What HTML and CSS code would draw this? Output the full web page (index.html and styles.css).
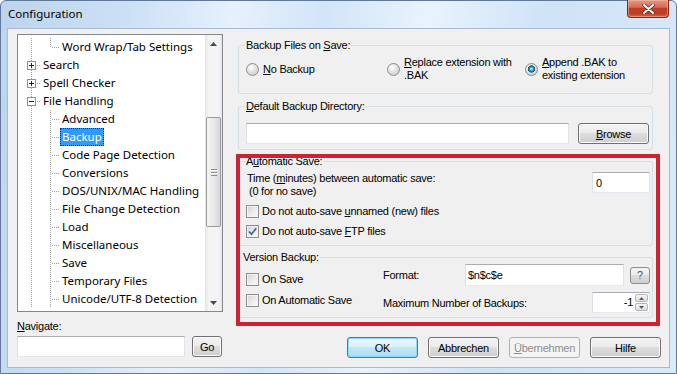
FILE: index.html
```html
<!DOCTYPE html>
<html lang="en">
<head>
    <meta charset="UTF-8">
    <title>Configuration</title>
    <link rel="stylesheet" href="styles.css">
</head>
<body>
    <div class="window">
        <div class="titlebar">
            <span class="title">Configuration</span>
            <button class="close-btn" type="button" aria-label="Close">
                <svg width="13" height="10" viewBox="0 0 13 10">
                    <path d="M2 1 L11 9 M11 1 L2 9" stroke="#6b2a20" stroke-width="3.4" stroke-linecap="round" fill="none"/>
                    <path d="M2 1 L11 9 M11 1 L2 9" stroke="#ffffff" stroke-width="2" stroke-linecap="round" fill="none"/>
                </svg>
            </button>
        </div>

        <div class="client">
            <!-- left: page tree + navigate box -->
            <div class="left-col">
                <div class="tree">
                    <ul class="tree-items">
                        <li class="node"><span class="g g-line"></span><span class="g g-end"></span><span class="label">Word Wrap/Tab Settings</span></li>
                        <li class="node"><span class="g g-tee"><span class="exp plus"></span></span><span class="label">Search</span></li>
                        <li class="node"><span class="g g-tee"><span class="exp plus"></span></span><span class="label">Spell Checker</span></li>
                        <li class="node"><span class="g g-tee"><span class="exp minus"></span></span><span class="label">File Handling</span></li>
                        <li class="node"><span class="g g-line"></span><span class="g g-tee"></span><span class="label">Advanced</span></li>
                        <li class="node"><span class="g g-line"></span><span class="g g-tee"></span><span class="label sel">Backup</span></li>
                        <li class="node"><span class="g g-line"></span><span class="g g-tee"></span><span class="label">Code Page Detection</span></li>
                        <li class="node"><span class="g g-line"></span><span class="g g-tee"></span><span class="label">Conversions</span></li>
                        <li class="node"><span class="g g-line"></span><span class="g g-tee"></span><span class="label">DOS/UNIX/MAC Handling</span></li>
                        <li class="node"><span class="g g-line"></span><span class="g g-tee"></span><span class="label">File Change Detection</span></li>
                        <li class="node"><span class="g g-line"></span><span class="g g-tee"></span><span class="label">Load</span></li>
                        <li class="node"><span class="g g-line"></span><span class="g g-tee"></span><span class="label">Miscellaneous</span></li>
                        <li class="node"><span class="g g-line"></span><span class="g g-tee"></span><span class="label">Save</span></li>
                        <li class="node"><span class="g g-line"></span><span class="g g-tee"></span><span class="label">Temporary Files</span></li>
                        <li class="node"><span class="g g-line"></span><span class="g g-tee"></span><span class="label">Unicode/UTF-8 Detection</span></li>
                    </ul>
                    <div class="vscroll">
                        <span class="sb-arrow">
                            <svg width="7" height="4" viewBox="0 0 7 4"><polygon points="0,4 3.5,0 7,4" fill="#4a4a4a"/></svg>
                        </span>
                        <div class="sb-track">
                            <div class="sb-thumb"><span class="grip"></span></div>
                        </div>
                        <span class="sb-arrow">
                            <svg width="7" height="4" viewBox="0 0 7 4"><polygon points="0,0 7,0 3.5,4" fill="#4a4a4a"/></svg>
                        </span>
                    </div>
                </div>
                <label class="nav-label" for="navigate"><u>N</u>avigate:</label>
                <div class="nav-row">
                    <input class="textbox nav-input" id="navigate" type="text">
                    <button class="btn go-btn" type="button">Go</button>
                </div>
            </div>

            <!-- right: backup page -->
            <div class="right-col">
                <fieldset class="group">
                    <legend>Backup Files on <u>S</u>ave:</legend>
                    <div class="radio-row">
                        <label class="radio"><span class="radio-box"></span><span><u>N</u>o Backup</span></label>
                        <label class="radio"><span class="radio-box"></span><span><u>R</u>eplace extension with<br>.BAK</span></label>
                        <label class="radio"><span class="radio-box on"></span><span><u>A</u>ppend .BAK to<br>existing extension</span></label>
                    </div>
                </fieldset>

                <fieldset class="group group-dir">
                    <legend><u>D</u>efault Backup Directory:</legend>
                    <div class="dir-row">
                        <input class="textbox dir-input" type="text">
                        <button class="btn" type="button"><u>B</u>rowse</button>
                    </div>
                </fieldset>

                <div class="annotated">
                    <fieldset class="group group-auto">
                        <legend>A<u>u</u>tomatic Save:</legend>
                        <div class="auto-row">
                            <span class="auto-text">Time (<u>m</u>inutes) between automatic save:<br><span class="indent">(0 for no save)</span></span>
                            <input class="textbox num-input" type="text" value="0">
                        </div>
                        <label class="check"><span class="check-box"></span><span>Do not auto-save <u>u</u>nnamed (new) files</span></label>
                        <label class="check"><span class="check-box">
                            <svg width="11" height="11" viewBox="0 0 11 11"><path d="M2 5.5 L4.5 8.2 L9.2 2.2" stroke="#4b5d97" stroke-width="1.7" fill="none"/></svg>
                        </span><span>Do not auto-save <u>F</u>TP files</span></label>
                    </fieldset>

                    <fieldset class="group group-version">
                        <legend>Version Backup:</legend>
                        <div class="version-body">
                            <div class="ver-checks">
                                <label class="check"><span class="check-box"></span><span>On Save</span></label>
                                <label class="check"><span class="check-box"></span><span>On Automatic Save</span></label>
                            </div>
                            <div class="ver-fields">
                                <div class="field-row format-row">
                                    <span class="field-label">Format:</span>
                                    <input class="textbox format-input" type="text" value="$n$c$e">
                                    <button class="help-btn" type="button">?</button>
                                </div>
                                <div class="field-row">
                                    <span class="field-label">Maximum Number of Backups:</span>
                                    <div class="spin">
                                        <span class="spin-value">-1</span>
                                        <span class="spin-btns">
                                            <span class="spin-btn"><svg width="5" height="3" viewBox="0 0 5 3"><polygon points="0,3 2.5,0 5,3" fill="#5a5a5a"/></svg></span>
                                            <span class="spin-btn"><svg width="5" height="3" viewBox="0 0 5 3"><polygon points="0,0 5,0 2.5,3" fill="#5a5a5a"/></svg></span>
                                        </span>
                                    </div>
                                </div>
                            </div>
                        </div>
                    </fieldset>
                </div>

                <div class="button-row">
                    <button class="btn btn-default" type="button">OK</button>
                    <button class="btn" type="button">Abbrechen</button>
                    <button class="btn" type="button" disabled><u>Ü</u>bernehmen</button>
                    <button class="btn" type="button">Hilfe</button>
                </div>
            </div>
        </div>
    </div>
</body>
</html>
```

FILE: styles.css
```css
/* Vista style configuration dialog */
* {
    box-sizing: border-box;
}

body {
    margin: 0;
    background: #ffffff;
    font-family: "Liberation Sans", Arial, sans-serif;
    font-size: 11px;
    letter-spacing: -0.25px;
    color: #000;
}

/* window frame */
.window {
    width: 677px;
    height: 374px;
    display: flex;
    flex-direction: column;
    padding: 0 7px 6px;
    border: 1px solid #60789a;
    border-radius: 6px 6px 0 0;
    background: linear-gradient(100deg, #bcd4ec 0%, #cde1f5 18%, #e6f1fc 32%, #d2e5f7 44%, #e8f3fd 58%, #cfe3f6 74%, #d9eaf9 100%);
}

.titlebar {
    height: 28px;
    display: flex;
    justify-content: space-between;
    align-items: flex-start;
}

.title {
    font-family: "Noto Sans", sans-serif;
    font-size: 11.5px;
    letter-spacing: 0;
    line-height: 16px;
    margin-top: 5px;
}

.close-btn {
    width: 42px;
    height: 18px;
    margin-top: -1px;
    padding: 0;
    display: flex;
    align-items: center;
    justify-content: center;
    border: 1px solid #7a2a1f;
    border-top: none;
    border-radius: 0 0 4px 4px;
    background: linear-gradient(#e49a88 0%, #d86a52 42%, #c23e22 50%, #bd3f25 80%, #d0694d 100%);
    box-shadow: inset 0 0 0 1px rgba(255, 200, 180, 0.45);
}

.client {
    height: 338px;
    display: grid;
    grid-template-columns: 206px 425px;
    column-gap: 14px;
    padding-left: 9px;
    background: #f0f0f0;
    box-shadow: 0 0 0 1px #a6bbd3;
}

/* left column */
.left-col {
    display: flex;
    flex-direction: column;
    padding-top: 5px;
}

.tree {
    height: 278px;
    display: flex;
    border: 1px solid #828790;
    background: #fff;
}

.tree-items {
    flex: 1;
    margin: 0;
    padding: 3px 0 0 4px;
    list-style: none;
    overflow: hidden;
    font-family: "Noto Sans", sans-serif;
    font-size: 11.5px;
    letter-spacing: 0;
}

.node {
    height: 18px;
    display: flex;
    align-items: center;
    white-space: nowrap;
}

.g {
    width: 19px;
    height: 18px;
    flex: none;
    display: flex;
    align-items: center;
    justify-content: center;
}

.g-line {
    background: repeating-linear-gradient(to bottom, #a0a0a0 0 1px, transparent 1px 2px) 9px 0 / 1px 100% no-repeat;
}

.g-tee {
    background:
        repeating-linear-gradient(to bottom, #a0a0a0 0 1px, transparent 1px 2px) 9px 0 / 1px 100% no-repeat,
        repeating-linear-gradient(to right, #a0a0a0 0 1px, transparent 1px 2px) 11px 9px / 8px 1px no-repeat;
}

.g-end {
    background:
        repeating-linear-gradient(to bottom, #a0a0a0 0 1px, transparent 1px 2px) 9px 0 / 1px 10px no-repeat,
        repeating-linear-gradient(to right, #a0a0a0 0 1px, transparent 1px 2px) 11px 9px / 8px 1px no-repeat;
}

.exp {
    width: 9px;
    height: 9px;
    border: 1px solid #919191;
    background: #fff;
}

.exp.plus {
    background:
        linear-gradient(#222, #222) center / 5px 1px no-repeat,
        linear-gradient(#222, #222) center / 1px 5px no-repeat,
        #fff;
}

.exp.minus {
    background: linear-gradient(#222, #222) center / 5px 1px no-repeat, #fff;
}

.label {
    padding: 0 2px;
    line-height: 18px;
}

.label.sel {
    background: #3399ff;
    color: #fff;
    outline: 1px dotted #103050;
    outline-offset: -1px;
}

/* scrollbar */
.vscroll {
    width: 17px;
    display: flex;
    flex-direction: column;
    background: linear-gradient(to right, #e2e2e2 0%, #f4f4f4 20%, #f4f4f4 80%, #e6e6e6 100%);
}

.sb-arrow {
    height: 17px;
    display: flex;
    align-items: center;
    justify-content: center;
}

.sb-track {
    flex: 1;
    padding: 0 1px;
}

.sb-thumb {
    height: 110px;
    margin-top: 65px;
    display: flex;
    align-items: center;
    justify-content: center;
    border: 1px solid #9a9a9a;
    border-radius: 2px;
    background: linear-gradient(to right, #f6f6f6 0%, #e9e9e9 50%, #d9d9d9 100%);
}

.grip {
    width: 6px;
    height: 7px;
    background: repeating-linear-gradient(to bottom, #8a8a8a 0 1px, #fafafa 1px 2px, transparent 2px 3px);
}

.nav-label {
    margin-top: 8px;
    line-height: 13px;
}

.nav-row {
    margin-top: 3px;
    display: flex;
    align-items: flex-end;
    gap: 7px;
}

.nav-input {
    width: 168px;
    height: 22px;
}

/* controls */
.textbox {
    height: 21px;
    padding: 0 3px;
    border: 1px solid;
    border-color: #abadb3 #e2e3ea #e3e9ef #dbdfe6;
    background: #fff;
    font: inherit;
    letter-spacing: inherit;
    color: #000;
    outline: none;
}

.btn {
    width: 71px;
    height: 21px;
    padding: 0;
    font: inherit;
    letter-spacing: inherit;
    color: #000;
    border: 1px solid #707070;
    border-radius: 3px;
    background: linear-gradient(#f3f3f3 0%, #ebebeb 48%, #dddddd 50%, #cfcfcf 100%);
    box-shadow: inset 0 0 0 1px #fbfbfb;
}

.btn.go-btn {
    width: 30px;
}

.btn-default {
    border-color: #3c7fb1;
    background: linear-gradient(#ecf7fd 0%, #dcf1fc 48%, #c2e7fc 50%, #acdcf6 100%);
    box-shadow: inset 0 0 0 1px #8fd6f7;
}

.btn:disabled {
    color: #8d8d8d;
    border-color: #adb2b5;
    background: #f4f4f4;
    box-shadow: none;
}

.radio {
    display: flex;
    align-items: center;
    gap: 4px;
    line-height: 13px;
}

.radio-box {
    width: 13px;
    height: 13px;
    flex: none;
    border: 1px solid #8c8c8c;
    border-radius: 50%;
    background: radial-gradient(circle at 38% 32%, #ffffff 0%, #e2e2e2 45%, #c6c6c6 100%);
}

.radio-box.on {
    background:
        radial-gradient(circle at 50% 45%, #8fdcf7 0 1px, #2a93bf 2px, #0c5573 3.4px, transparent 3.9px),
        radial-gradient(circle at 38% 32%, #ffffff 0%, #e2e2e2 45%, #c6c6c6 100%);
}

.check {
    display: flex;
    align-items: center;
    gap: 3px;
    line-height: 13px;
    white-space: nowrap;
}

.check-box {
    width: 13px;
    height: 13px;
    flex: none;
    display: flex;
    align-items: center;
    justify-content: center;
    border: 1px solid #8f8f8f;
    background: linear-gradient(135deg, #d2d2d2 0%, #ececec 55%, #fbfbfb 100%);
    box-shadow: inset 0 0 0 1px #f4f4f4;
}

/* right column */
.right-col {
    display: flex;
    flex-direction: column;
    padding-top: 9px;
}

.group {
    margin: 0 9px 0 1px;
    padding: 4px 2px 11px 7px;
    min-width: 0;
    border: 1px solid #d5dfe5;
    border-radius: 3px;
}

.group legend {
    padding: 0 1px;
    margin-left: -1px;
    line-height: 14px;
}

.radio-row {
    height: 26px;
    display: grid;
    grid-template-columns: 141px 138px 1fr;
    align-items: center;
}

.group-dir {
    margin-top: 5px;
    padding: 10px 3px 5px 7px;
}

.dir-row {
    display: flex;
    gap: 9px;
}

.dir-input {
    width: 323px;
}

.annotated {
    position: relative;
    margin-top: 4px;
}

/* red highlight frame drawn over the two groups */
.annotated::after {
    content: "";
    position: absolute;
    top: 0;
    left: -1px;
    right: 2px;
    bottom: -8px;
    border: 4px solid #cc2233;
    pointer-events: none;
}

.group-auto {
    padding: 4px 2px 7px 7px;
}

.auto-row {
    height: 26px;
    display: flex;
    justify-content: space-between;
    line-height: 13px;
}

.auto-text {
    padding-left: 1px;
}

.indent {
    padding-left: 2px;
}

.num-input {
    width: 58px;
}

.group-auto .check {
    margin-top: 7px;
}

.group-version {
    margin-top: 4px;
    padding: 0 2px 4px 7px;
}

.group-version legend {
    margin-left: -4px;
}

.version-body {
    display: flex;
}

.ver-checks {
    width: 137px;
    display: flex;
    flex-direction: column;
    gap: 8px;
    padding-top: 9px;
}

.ver-fields {
    flex: 1;
    display: flex;
    flex-direction: column;
    gap: 6px;
}

.field-row {
    height: 21px;
    display: flex;
    align-items: center;
    justify-content: space-between;
    white-space: nowrap;
}

.format-row {
    height: 22px;
    gap: 6px;
}

.format-row .field-label {
    width: 76px;
}

.format-input {
    flex: 1;
    height: 22px;
    padding-left: 2px;
}

.help-btn {
    width: 20px;
    height: 17px;
    padding: 0;
    font: inherit;
    color: #555;
    border: 1px solid #8e8e8e;
    border-radius: 3px;
    background: linear-gradient(#f3f3f3 0%, #ebebeb 48%, #dddddd 50%, #cfcfcf 100%);
}

.spin {
    width: 58px;
    height: 21px;
    display: flex;
    border: 1px solid;
    border-color: #abadb3 #e2e3ea #e3e9ef #dbdfe6;
    background: #fff;
}

.spin-value {
    flex: 1;
    text-align: right;
    line-height: 19px;
    padding-right: 2px;
}

.spin-btns {
    width: 14px;
    display: flex;
    flex-direction: column;
    gap: 1px;
    padding: 1px 1px 1px 0;
}

.spin-btn {
    flex: 1;
    display: flex;
    align-items: center;
    justify-content: center;
    border: 1px solid #b5b5b5;
    border-radius: 2px;
    background: linear-gradient(#f5f5f5, #dedede);
}

.button-row {
    margin-top: 19px;
    display: flex;
    justify-content: flex-end;
    gap: 10px;
    padding-right: 1px;
}
```
